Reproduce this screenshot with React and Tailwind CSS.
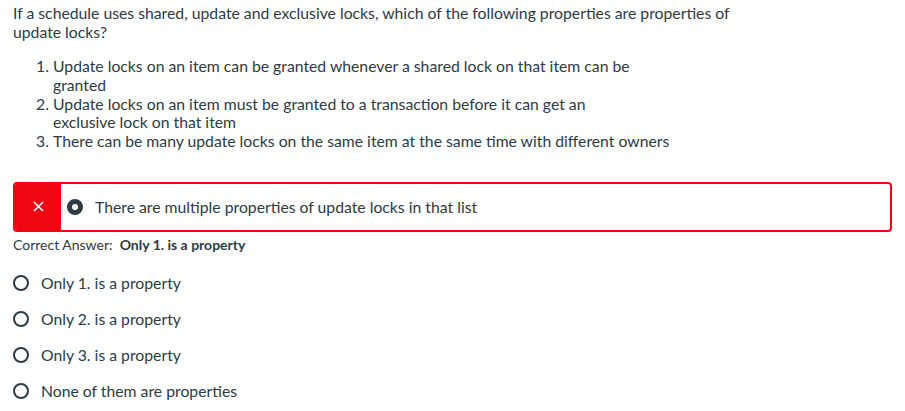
import React from "react";

const options = [
  "Only 1. is a property",
  "Only 2. is a property",
  "Only 3. is a property",
  "None of them are properties",
];

const Radio = ({ checked }) =>
  checked ? (
    <span className="inline-block w-[16px] h-[16px] rounded-full border-[5px] border-[#2d3b45] bg-white shrink-0" />
  ) : (
    <span className="inline-block w-[16px] h-[16px] rounded-full border-2 border-[#2d3b45] bg-white shrink-0" />
  );

export default function App() {
  return (
    <div className="bg-white text-[#2d3b45] font-['Lato',sans-serif] px-[13px] pt-[3px] w-[905px] h-[411px] overflow-hidden">
      {/* question */}
      <p className="text-[15.75px] leading-[19px] max-w-[760px]">
        If a schedule uses shared, update and exclusive locks, which of the following properties are properties of
        update locks?
      </p>
      <ol className="list-decimal pl-[40px] mt-[16px] text-[15.75px] leading-[18.75px]">
        <li>
          Update locks on an item can be granted whenever a shared lock on that item can be
          <br />
          granted
        </li>
        <li>
          Update locks on an item must be granted to a transaction before it can get an
          <br />
          exclusive lock on that item
        </li>
        <li>There can be many update locks on the same item at the same time with different owners</li>
      </ol>

      {/* chosen answer (wrong) */}
      <div className="mt-[31px] flex h-[50px] rounded-[4px] border-2 border-[#ee0612] overflow-hidden">
        <div className="w-[46px] bg-[#ee0612] flex items-center justify-center">
          <svg width="11" height="11" viewBox="0 0 11 11" stroke="white" strokeWidth="1.6">
            <path d="M1 1 L10 10 M10 1 L1 10" />
          </svg>
        </div>
        <div className="flex items-center gap-[12px] pl-[6px] text-[15.75px]">
          <Radio checked />
          <span>There are multiple properties of update locks in that list</span>
        </div>
      </div>

      <div className="mt-[4px] text-[14px] leading-[18px]">
        Correct Answer:&nbsp; <span className="font-bold">Only 1. is a property</span>
      </div>

      {/* options */}
      <div className="mt-[20px] flex flex-col gap-[18px]">
        {options.map((o) => (
          <label key={o} className="flex items-center gap-[12px] text-[15.75px] leading-[18px]">
            <Radio />
            <span>{o}</span>
          </label>
        ))}
      </div>
    </div>
  );
}
